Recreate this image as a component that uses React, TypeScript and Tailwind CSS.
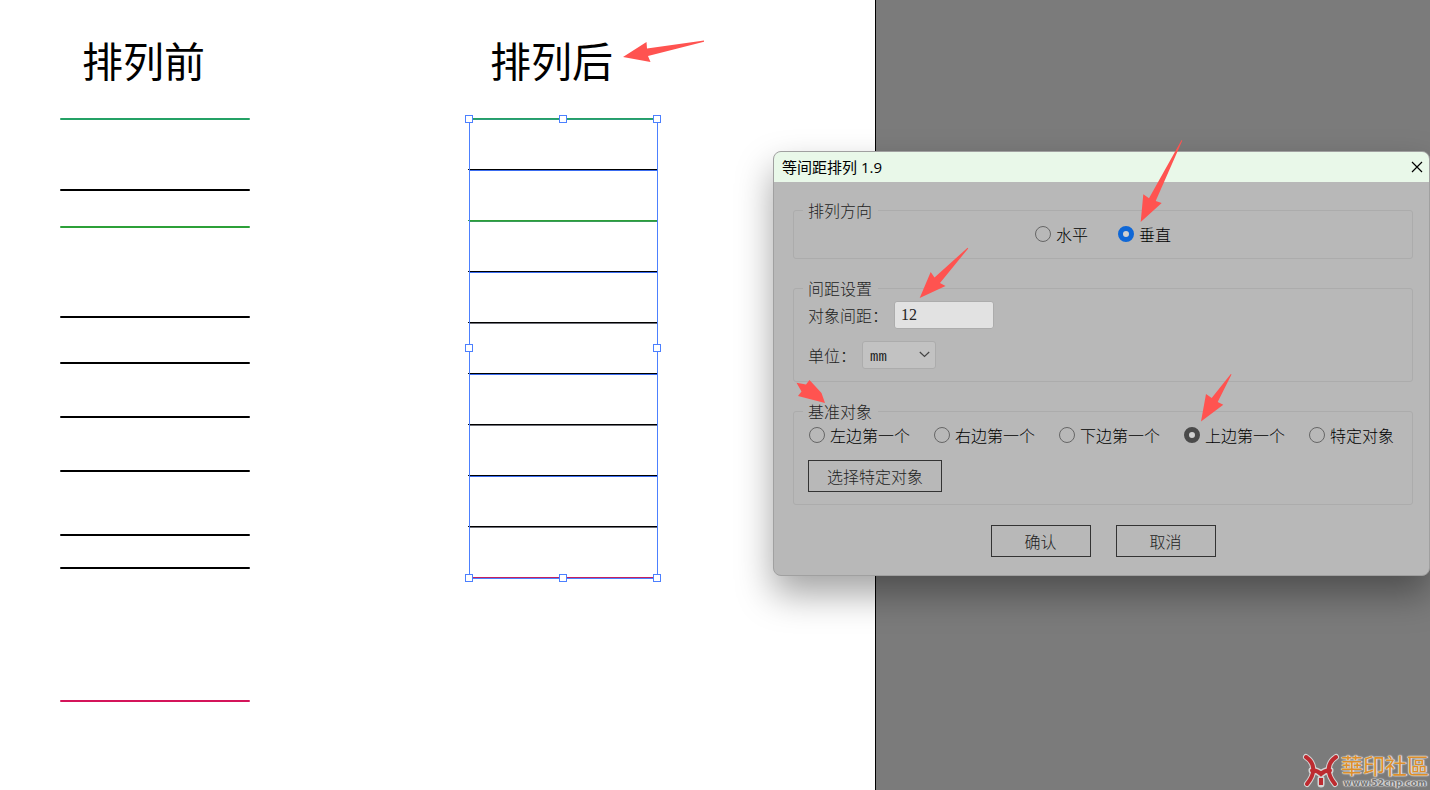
import { useState } from 'react'

const beforeLines = [
  { y: 119, color: '#24a165' },
  { y: 190, color: '#000000' },
  { y: 227, color: '#2ca038' },
  { y: 317, color: '#000000' },
  { y: 363, color: '#000000' },
  { y: 417, color: '#000000' },
  { y: 471, color: '#000000' },
  { y: 535, color: '#000000' },
  { y: 568, color: '#000000' },
  { y: 701, color: '#d4145a' },
]

const afterLines = [
  { y: 118, color: '#24a165', path: '#2f9c7c' },
  { y: 169, color: '#000000', path: '#3a6cf0' },
  { y: 220, color: '#2ca038', path: '#3a9a5a' },
  { y: 271, color: '#000000', path: '#3a6cf0' },
  { y: 322, color: '#000000', path: '#6f7078' },
  { y: 373, color: '#000000', path: '#3a6cf0' },
  { y: 424, color: '#000000', path: '#6f7078' },
  { y: 475, color: '#000000', path: '#3a6cf0' },
  { y: 526, color: '#000000', path: '#6f7078' },
  { y: 577, color: '#c4205f', path: '#4c80ff' },
]

const directions = ['水平', '垂直']
const anchors = ['左边第一个', '右边第一个', '下边第一个', '上边第一个', '特定对象']

function BeforeArt() {
  return (
    <svg className="mt-[30px] block" width="190" height="600" viewBox="60 112 190 600">
      {beforeLines.map((line) => (
        <line key={line.y} x1="61" x2="249" y1={line.y} y2={line.y} stroke={line.color} strokeWidth="2" strokeLinecap="round" />
      ))}
    </svg>
  )
}

function AfterArt() {
  return (
    <svg className="mt-[30px] block overflow-visible" width="190" height="600" viewBox="468 112 190 600" shapeRendering="crispEdges">
      {afterLines.map((line) => (
        <g key={line.y}>
          <rect x="468" y={line.y} width="190" height="1" fill={line.color} />
          <rect x="469" y={line.y + 1} width="188" height="1" fill={line.path} />
        </g>
      ))}
      {/* Marco de selección */}
      <path d="M469.5 119V578M657.5 119V578" stroke="#4c80ff" />
      {[
        [465.5, 115.5],
        [559.5, 115.5],
        [653.5, 115.5],
        [465.5, 344.5],
        [653.5, 344.5],
        [465.5, 574.5],
        [559.5, 574.5],
        [653.5, 574.5],
      ].map(([x, y]) => (
        <rect key={`${x}-${y}`} x={x} y={y} width="7" height="7" fill="#ffffff" stroke="#4c80ff" />
      ))}
    </svg>
  )
}

interface RadioProps {
  name: string
  label: string
  checked: boolean
  tone: 'blue' | 'gray'
  onChange: () => void
}

function Radio({ name, label, checked, tone, onChange }: RadioProps) {
  return (
    <label className="flex h-6 items-center gap-[5px] whitespace-nowrap text-black">
      <input
        type="radio"
        name={name}
        checked={checked}
        onChange={onChange}
        className={`size-4 shrink-0 appearance-none rounded-full border border-[#666666] checked:border-[5px] checked:bg-[#d0d0d0] ${
          tone === 'blue' ? 'checked:border-[#0f67d6]' : 'checked:border-[#4a4a4a]'
        }`}
      />
      {label}
    </label>
  )
}

function SpacingDialog() {
  const [direction, setDirection] = useState('垂直')
  const [anchor, setAnchor] = useState('上边第一个')
  const [spacing, setSpacing] = useState('12')
  const [unit, setUnit] = useState('mm')

  const fieldset = 'min-w-0 rounded-[3px] border border-[#acacac] px-[9px] pb-3'
  const legend = 'h-6 px-[5px] pr-[6px] leading-6'
  const button = 'h-8 border border-[#333333] text-[#222222] hover:bg-[#c4c4c4]'

  return (
    <div
      role="dialog"
      aria-labelledby="dialog-title"
      className="absolute top-[151px] right-0 w-[657px] rounded-lg border border-[#a0a0a0] bg-[#b8b8b8] font-['Noto_Sans_CJK_SC',sans-serif] text-base font-light text-[#222222] shadow-[0_18px_36px_rgba(0,0,0,0.36)]"
    >
      <header className="flex h-[30px] items-center justify-between rounded-t-[7px] bg-[#e9f8e9] pr-1 pl-2 text-black">
        <h2 id="dialog-title" className="font-['Open_Sans','Noto_Sans_CJK_SC',sans-serif] text-[15px] leading-5 font-normal">等间距排列 1.9</h2>
        <button type="button" aria-label="关闭" className="flex size-4 items-center justify-center">
          <svg width="12" height="12" viewBox="0 0 12 12" stroke="#000000" strokeWidth="1.2">
            <path d="M1 1L11 11M11 1L1 11" />
          </svg>
        </button>
      </header>

      <div className="pt-4 pr-4 pb-[18px] pl-[19px]">
        <fieldset className={fieldset}>
          <legend className={legend}>排列方向</legend>
          <div className="flex justify-center gap-[30px]">
            {directions.map((item) => (
              <Radio key={item} name="direction" label={item} tone="blue" checked={direction === item} onChange={() => setDirection(item)} />
            ))}
          </div>
        </fieldset>

        <fieldset className={`mt-[17px] ${fieldset}`}>
          <legend className={legend}>间距设置</legend>
          <div className="flex items-center gap-[6px] pt-px pl-[5px]">
            <label htmlFor="spacing">对象间距：</label>
            <input
              id="spacing"
              type="text"
              value={spacing}
              onChange={(e) => setSpacing(e.target.value)}
              className="h-7 w-[100px] rounded-[3px] border border-[#acacac] bg-[#e2e2e2] px-[6px] font-['Liberation_Serif',serif] text-base font-normal"
            />
          </div>
          <div className="mt-3 flex items-center gap-[6px] pl-[5px]">
            <label htmlFor="unit">单位：</label>
            <div className="relative">
              <select
                id="unit"
                value={unit}
                onChange={(e) => setUnit(e.target.value)}
                className="block h-7 w-[74px] appearance-none rounded-[3px] border border-[#acacac] bg-[#c2c2c2] pt-1 pl-[7px] font-['Liberation_Mono',monospace] text-sm font-normal"
              >
                <option>mm</option>
                <option>cm</option>
                <option>pt</option>
              </select>
              <svg className="pointer-events-none absolute top-[10px] right-[6px]" width="11" height="7" viewBox="0 0 11 7" fill="none" stroke="#444444" strokeWidth="1.2">
                <path d="M0.8 1L5.5 5.5L10.2 1" />
              </svg>
            </div>
          </div>
        </fieldset>

        <fieldset className={`mt-[17px] ${fieldset}`}>
          <legend className={legend}>基准对象</legend>
          <div className="flex gap-6 pl-[6px]">
            {anchors.map((item) => (
              <Radio key={item} name="anchor" label={item} tone="gray" checked={anchor === item} onChange={() => setAnchor(item)} />
            ))}
          </div>
          <button type="button" className={`mt-[13px] ml-[5px] w-[134px] ${button}`}>选择特定对象</button>
        </fieldset>

        <div className="mt-5 flex justify-center gap-[25px]">
          <button type="button" className={`w-[100px] ${button}`}>确认</button>
          <button type="button" className={`w-[100px] ${button}`}>取消</button>
        </div>
      </div>

      {/* Flechas de anotación */}
      <svg className="pointer-events-none absolute -top-px -left-px overflow-visible" width="657" height="426" viewBox="773 151 657 426" fill="#ff5350">
        <path d="M1140.7 222L1143.3 194.3L1149 198.3L1181.6 140L1182.3 140.5L1155.7 201L1161.7 203Z" />
        <path d="M919.7 298L930.7 272L934.5 277.5L967.6 247.7L968.2 248.4L940 283L945.5 286Z" />
        <path d="M825 403L798 396L801.5 391.5L796.5 382.7L806 384.5L809.5 380L821.5 393Z" />
        <path d="M1201 421.5L1206 394L1211.7 398L1230.8 374L1231.5 374.5L1217.7 402L1223.3 404.7Z" />
      </svg>
    </div>
  )
}

function Watermark() {
  const glow = '[text-shadow:0_0_1px_#e4e4e4,0_0_2px_#e4e4e4,1px_0_1px_#dddddd,-1px_0_1px_#dddddd]'
  const brackets = 'M4 5C13 11 14 21 5 32M34 5C25 11 24 21 33 32'
  const bar = 'M10 18.5C14 18 17 20 19 22C21 20 24 18 28 18.5'

  return (
    <div className="absolute right-px bottom-0 flex items-center gap-px">
      <svg width="38" height="38" viewBox="0 0 38 38" fill="none" strokeLinecap="round">
        <g stroke="#d4d4d4">
          <path d={brackets} strokeWidth="6" />
          <path d={bar} strokeWidth="7" />
          <path d="M19 27V32" strokeWidth="7" />
        </g>
        <g stroke="#bd2b30">
          <path d={brackets} strokeWidth="4" />
          <path d={bar} strokeWidth="4" />
          <path d="M19 26V33" strokeWidth="4" strokeLinecap="butt" />
        </g>
      </svg>
      <div className="flex flex-col items-center">
        <span className={`font-['Noto_Sans_CJK_TC',sans-serif] text-[22px] leading-6 text-[#dd8f2a] ${glow}`}>華印社區</span>
        <span className={`font-['DejaVu_Sans',sans-serif] text-[9px] leading-[14px] font-bold text-[#777777] ${glow}`}>www.52cnp.com</span>
      </div>
    </div>
  )
}

export default function App() {
  return (
    <div className="relative flex min-h-screen overflow-hidden bg-white">
      <main className="flex flex-1 gap-[218px] pt-9 pl-[60px] font-['Noto_Sans_CJK_SC',sans-serif] text-black">
        <section>
          <h1 className="pl-[22px] text-[41px] leading-[46px] whitespace-nowrap">排列前</h1>
          <BeforeArt />
        </section>
        <section>
          <div className="relative pl-[22px]">
            <h1 className="text-[41px] leading-[46px] whitespace-nowrap">排列后</h1>
            <svg className="absolute top-1 left-[154px]" width="84" height="24" viewBox="622 40 84 24" fill="#ff5350">
              <path d="M623 57L646.5 42L647 48.5L704 40.5V41.7L648 56L650.5 62Z" />
            </svg>
          </div>
          <AfterArt />
        </section>
      </main>
      <aside className="w-[555px] shrink-0 border-l border-black bg-[#7b7b7b]" />
      <SpacingDialog />
      <Watermark />
    </div>
  )
}
